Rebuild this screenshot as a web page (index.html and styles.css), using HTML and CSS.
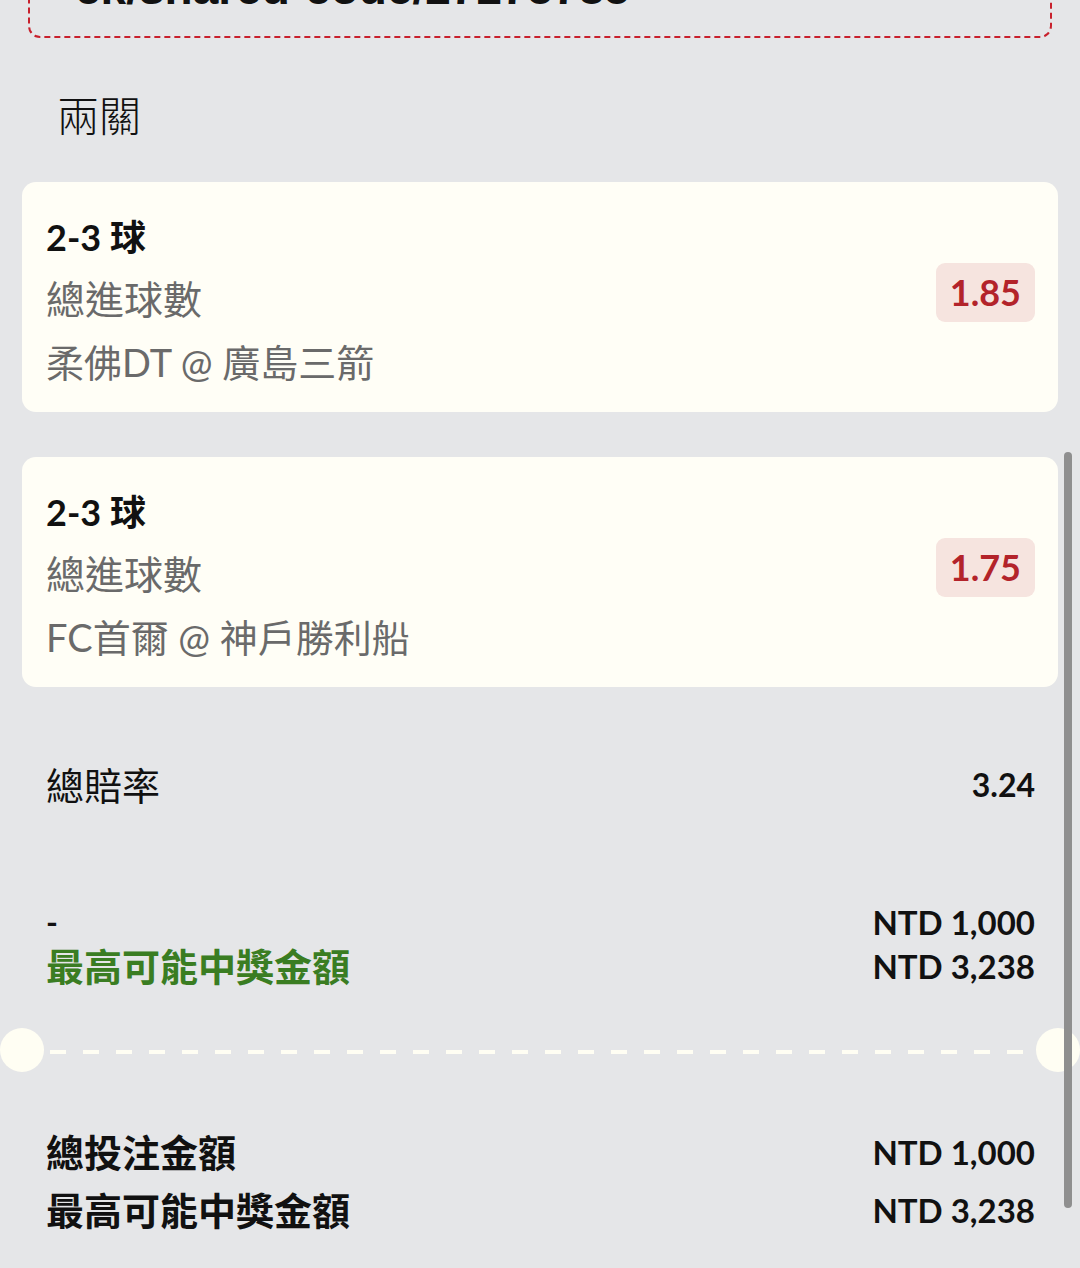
FILE: index.html
```html
<!DOCTYPE html>
<html lang="zh-Hant">
  <head>
    <meta charset="UTF-8" />
    <meta name="viewport" content="width=device-width, initial-scale=1.0" />
    <title>兩關</title>
    <link rel="stylesheet" href="styles.css">
  </head>
  <body>
    <div class="share-box">
      <span class="share-link">ck/shared-code/27275785</span>
    </div>

    <h2 class="bet-type">兩關</h2>

    <div class="selection">
      <div class="selection-info">
        <div class="pick">2-3 球</div>
        <div class="market">總進球數</div>
        <div class="match">柔佛DT @ 廣島三箭</div>
      </div>
      <div class="odds">1.85</div>
    </div>

    <div class="selection">
      <div class="selection-info">
        <div class="pick">2-3 球</div>
        <div class="market">總進球數</div>
        <div class="match">FC首爾 @ 神戶勝利船</div>
      </div>
      <div class="odds">1.75</div>
    </div>

    <div class="row total-odds">
      <span>總賠率</span>
      <span class="value">3.24</span>
    </div>

    <div class="summary">
      <span class="dash">-</span>
      <span class="value">NTD 1,000</span>
      <span class="win">最高可能中獎金額</span>
      <span class="value">NTD 3,238</span>
    </div>

    <div class="divider">
      <span class="notch"></span>
      <span class="dashes"></span>
      <span class="notch"></span>
    </div>

    <div class="totals">
      <span>總投注金額</span>
      <span class="value">NTD 1,000</span>
      <span>最高可能中獎金額</span>
      <span class="value">NTD 3,238</span>
    </div>

    <div class="scrollbar"></div>
  </body>
</html>
```

FILE: styles.css
```css
body {
  font-family: Lato, "Noto Sans CJK TC", sans-serif;
  background-color: #e5e6e8;
  color: #111;
  margin: 0;
  padding: 0 22px;
  height: 1268px;
  overflow: hidden;
  position: relative;
}

.share-box {
  margin: -62px 6px 0;
  height: 100px;
  border: 2px dashed #c8202c;
  border-radius: 12px;
  padding-left: 45px;
  box-sizing: border-box;
}

.share-link {
  display: block;
  font-family: "Liberation Sans", Arial, sans-serif;
  font-weight: 700;
  font-size: 46px;
  line-height: 50px;
  margin-top: 23px;
}

.bet-type {
  font-family: "Noto Sans CJK TC", sans-serif;
  font-weight: 300;
  font-size: 42px;
  line-height: 50px;
  margin: 51px 0 43px 35px;
}

.selection {
  display: flex;
  align-items: center;
  justify-content: space-between;
  background: #fffef6;
  border-radius: 14px;
  padding: 24px 23px 18px 24px;
  margin-bottom: 45px;
}

.selection-info {
  display: flex;
  flex-direction: column;
}

.pick {
  font-size: 36px;
  font-weight: 700;
  line-height: 62px;
}

.market,
.match {
  font-size: 39px;
  line-height: 62px;
  color: #6a6a6a;
}

.match {
  font-size: 38px;
  line-height: 64px;
}

.odds {
  background: #f6e4df;
  color: #b3232a;
  font-size: 36px;
  font-weight: 700;
  line-height: 59px;
  padding: 0 14px;
  border-radius: 9px;
  margin-top: -16px;
}

.row {
  display: flex;
  justify-content: space-between;
  align-items: center;
  padding: 0 23px 0 24px;
}

.total-odds {
  margin-top: 73px;
  font-size: 38px;
  line-height: 50px;
}

.total-odds .value {
  font-size: 32px;
  font-weight: 700;
}

.summary {
  display: grid;
  grid-template-columns: 1fr auto;
  align-items: center;
  padding: 0 23px 0 24px;
  margin-top: 90px;
  line-height: 44px;
}

.summary .value,
.totals .value {
  font-size: 33px;
  font-weight: 700;
  text-align: right;
}

.dash {
  font-size: 32px;
  font-weight: 700;
}

.win {
  font-size: 38px;
  font-weight: 700;
  color: #3a7d22;
}

.divider {
  display: flex;
  align-items: center;
  margin: 40px -22px 0;
  height: 44px;
}

.notch {
  flex: none;
  width: 44px;
  height: 44px;
  border-radius: 50%;
  background: #fffef3;
}

.dashes {
  flex: 1;
  height: 4px;
  margin: 3px 6px 0;
  background: repeating-linear-gradient(
    to right,
    #fffef3 0 16px,
    transparent 16px 33px
  );
}

.totals {
  display: grid;
  grid-template-columns: 1fr auto;
  align-items: center;
  padding: 0 23px 0 24px;
  margin-top: 51px;
  font-size: 38px;
  font-weight: 700;
  line-height: 58px;
}

.scrollbar {
  position: absolute;
  top: 452px;
  right: 8px;
  width: 8px;
  height: 756px;
  border-radius: 4px;
  background: #8f8f8f;
}
```
